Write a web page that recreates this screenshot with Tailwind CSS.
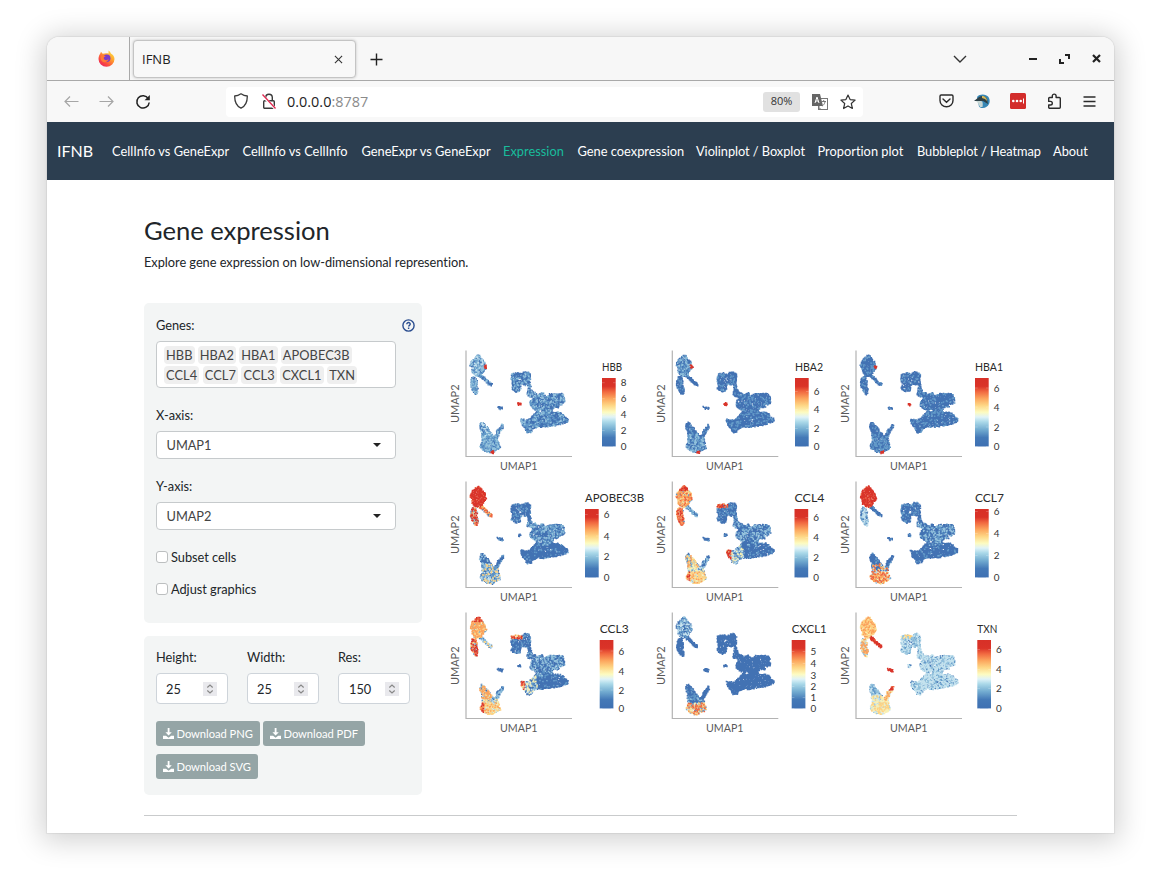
<!DOCTYPE html>
<html lang="en">
<head>
<meta charset="utf-8">
<title>IFNB</title>
<script src="https://cdn.jsdelivr.net/npm/@tailwindcss/browser@4"></script>
</head>
<body class="bg-white w-[1161px] h-[890px] overflow-hidden pt-[37px] pl-[47px] font-['Lato',sans-serif] text-[12.8px] tracking-[-0.035px] text-[#212529]">
<div class="w-[1067px] h-[796px] bg-white rounded-t-xl overflow-clip shadow-[0_3px_28px_5px_rgba(0,0,0,0.18),0_0_1px_1px_rgba(0,0,0,0.06)] flex flex-col">
  <!-- tab strip -->
  <div class="h-11 shrink-0 bg-[#f7f7f7] border-b border-[#a9a9a9] flex items-center font-['Open_Sans',sans-serif]">
    <div class="w-[83px] h-full border-r border-[#a9a9a9] flex items-center justify-end pr-[14px]">
      <svg width="17" height="17" viewBox="0 0 17 17">
        <defs><linearGradient id="fx" x1="1" y1="0" x2="0.2" y2="1"><stop offset="0" stop-color="#fff04d"/><stop offset=".4" stop-color="#ffa52e"/><stop offset=".75" stop-color="#fb4b40"/><stop offset="1" stop-color="#e8215e"/></linearGradient></defs>
        <path d="M10.5.5c1.5 1 2 2 2.400 2.900C15 4.300 16.500 6.500 16.500 9A8 7.800 0 0 1 .5 9C.5 6.300 1.500 4.500 2.600 3L2.900 1.800 4.700 3.700C7 3 9 3 10.600 3.500Z" fill="url(#fx)"/>
        <circle cx="8.800" cy="8.300" r="3.700" fill="#7a3bc9"/>
        <path d="M3 6c1.500-1 3.500-.5 4.800.8-1.300 0-2 .5-2.100 1.400.5 2.200 3.600 2.800 5 .4-.5 3.400-3.500 4.400-5.600 3.400S2 8.500 3 6Z" fill="#ff7a35"/>
      </svg>
    </div>
    <div class="ml-[3px] w-[223px] h-[38px] rounded bg-[#f8f8f8] border border-[#c4c4c4] shadow-[0_0_3px_rgba(0,0,0,0.22)] flex items-center justify-between pl-2 pr-[12px] text-[13px] tracking-normal text-[#222]">
      <span class="pt-[2px]">IFNB</span>
      <svg class="mt-px" width="9" height="9" viewBox="0 0 10 10" stroke="#333" stroke-width="1.200"><path d="M1 1l8 8M9 1l-8 8"/></svg>
    </div>
    <svg class="ml-[14px] mt-px" width="13" height="13" viewBox="0 0 13 13" stroke="#222" stroke-width="1.400"><path d="M6.500.5v12M.5 6.500h12"/></svg>
    <div class="ml-auto flex items-center pr-[12px]">
      <svg width="14" height="8" viewBox="0 0 14 8" fill="none" stroke="#333" stroke-width="1.400"><path d="M1 1l6 6 6-6"/></svg>
      <svg class="ml-[62px]" width="8" height="10" viewBox="0 0 8 10"><path d="M0 4h8v2H0z" fill="#222"/></svg>
      <svg class="ml-[22px]" width="11" height="10" viewBox="0 0 11 10" fill="none" stroke="#222" stroke-width="2"><path d="M6 1h4v4M1 5v4h4"/></svg>
      <svg class="ml-[22px] mr-px" width="9" height="9" viewBox="0 0 9 9" stroke="#222" stroke-width="2.200"><path d="M1 1l7 7M8 1L1 8"/></svg>
    </div>
  </div>
  <!-- address bar -->
  <div class="h-[41px] shrink-0 bg-[#f8f8f8] flex items-center font-['Open_Sans',sans-serif]">
    <div class="flex items-center w-[179px] pl-[17px]">
      <svg width="15" height="12" viewBox="0 0 15 12" fill="none" stroke="#a6a6a6" stroke-width="1.200"><path d="M14.500 5.500H1M6 .5L1 5.500l5 5"/></svg>
      <svg class="ml-[20px]" width="15" height="12" viewBox="0 0 15 12" fill="none" stroke="#a6a6a6" stroke-width="1.200"><path d="M.5 5.500H14M9 .5l5 5-5 5"/></svg>
      <svg class="ml-[21px]" width="16" height="16" viewBox="0 0 16 16" fill="none" stroke="#222" stroke-width="1.500"><path d="M13.300 4.600A6.200 6.200 0 1 0 14.200 8.500"/><path d="M14.800 1v5.200H9.600z" fill="#222" stroke="none"/></svg>
    </div>
    <div class="w-[637px] h-[30px] bg-white rounded-sm flex items-center">
      <svg class="ml-[8px] mb-px" width="14" height="16" viewBox="0 0 14 16" fill="none" stroke="#3a3a3a" stroke-width="1.300"><path d="M7 .8C9 2.200 11 2.900 13.300 3 13.400 9 11.500 13 7 15.200 2.500 13 .6 9 .7 3 3 2.900 5 2.200 7 .8Z" stroke-linejoin="round"/></svg>
      <svg class="ml-[13px]" width="16" height="17" viewBox="0 0 16 17" fill="none" stroke="#3a3a3a" stroke-width="1.400"><rect x="2.700" y="7.700" width="10.600" height="7.600" rx="1"/><path d="M4.700 7.500V4.500a3.300 3.300 0 0 1 6.600 0v3"/><path d="M1.500 2.500l13.500 14" stroke="#fff" stroke-width="2.600"/><path d="M1.500 1.500l13 14" stroke="#e22850" stroke-width="1.300"/></svg>
      <div class="ml-[10px] text-[14.400px] tracking-[0.02px] text-[#222]">0.0.0.0<span class="text-[#8b8b8b]">:8787</span></div>
      <div class="ml-auto w-[37px] h-5 rounded-[3px] bg-[#e1e1e1] flex items-center justify-center text-[11px] tracking-normal text-[#333]">80%</div>
      <svg class="ml-[12px]" width="16" height="16" viewBox="0 0 16 16"><rect x="6.500" y="4.500" width="9" height="11" fill="#fff" stroke="#777"/><path d="M0 0h8l3 12H0z" fill="#666"/><path d="M3 9l2-6 2 6M3.700 7h2.600" stroke="#fff" fill="none"/><path d="M9.500 7.500h4.500M11.700 6v1.500M13 8c-.5 2-1.500 3-2.700 4M7 12v3h2" stroke="#777" fill="none"/></svg>
      <svg class="ml-[12px] mr-[7px]" width="16" height="16" viewBox="0 0 16 16" fill="none" stroke="#333" stroke-width="1.200" stroke-linejoin="round"><path d="M8 1l2.100 4.600 5 .5-3.800 3.400 1.100 5L8 11.900l-4.400 2.600 1.100-5L.9 6.100l5-.5Z"/></svg>
    </div>
    <div class="ml-auto flex items-center pr-[18px] pb-px">
      <svg width="15" height="14" viewBox="0 0 15 14" fill="none" stroke="#2b2b2b" stroke-width="1.400"><path d="M2.200 1h10.600a1.200 1.200 0 0 1 1.200 1.200V6.500a6.500 6.300 0 0 1-13 0V2.200A1.200 1.200 0 0 1 2.200 1Z"/><path d="M4 5l3.500 3.300L11 5" stroke-linecap="round"/></svg>
      <svg class="ml-[20px]" width="17" height="15" viewBox="0 0 17 15"><path d="M3 3C6-.5 12 0 14.500 3c2 3 1.500 7-1.500 9.500-3 2-6 2-8 0z" fill="#3787b5"/><path d="M0 7l5-4c3-2 7-1 8 2l1 5-5-3z" fill="#2d4148"/><path d="M2 7h5c2 0 2 3 1.500 6L6 13 4 9z" fill="#c7d7d5"/><path d="M8 2c3 0 5 2 5 5l-2-2-3-1z" fill="#d5b85b"/></svg>
      <svg class="ml-[19px]" width="16" height="16" viewBox="0 0 16 16"><rect width="16" height="16" rx="1.500" fill="#d32d2b"/><g fill="#fff"><circle cx="3.300" cy="8" r="1.300"/><circle cx="7" cy="8" r="1.300"/><circle cx="10.700" cy="8" r="1.300"/><path d="M13 5.500h1v5h-1z"/></g></svg>
      <svg class="ml-[21px]" width="15" height="16" viewBox="0 0 15 16" fill="none" stroke="#2b2b2b" stroke-width="1.400" stroke-linejoin="round"><path d="M1.700 5.500A1 1 0 0 1 2.700 4.500H5.300V3a1.900 1.900 0 0 1 3.800 0v1.500h3.200a1 1 0 0 1 1 1v8.800a1 1 0 0 1-1 1H2.700a1 1 0 0 1-1-1V12H3.500a1.800 1.800 0 0 0 0-3.600H1.700Z"/></svg>
      <svg class="ml-[21px]" width="13" height="11" viewBox="0 0 13 11" stroke="#2b2b2b" stroke-width="1.300"><path d="M.5 1h12M.5 5.500h12M.5 10h12"/></svg>
    </div>
  </div>
  <!-- application navigation -->
  <nav class="h-[58px] shrink-0 bg-[#2c3e50] flex items-center pl-[10px] pt-px text-white tracking-[0.02px] whitespace-nowrap">
    <span class="text-[16px] w-[55px] pb-[2px]">IFNB</span>
    <span class="w-[130.500px]">CellInfo vs GeneExpr</span><span class="w-[119px]">CellInfo vs CellInfo</span><span class="w-[141.500px]">GeneExpr vs GeneExpr</span><span class="w-[74.500px] text-[#18bc9c]">Expression</span><span class="w-[118.500px]">Gene coexpression</span><span class="w-[121.500px] tracking-[-0.05px]">Violinplot / Boxplot</span><span class="w-[99.500px]">Proportion plot</span><span class="w-[136px] tracking-[-0.05px]">Bubbleplot / Heatmap</span><span>About</span>
  </nav>
  <main class="pl-[97px] w-[970px]">
    <h1 class="pt-[34px] text-[25.600px] leading-8">Gene expression</h1>
    <p class="mt-[7px] leading-[18px]">Explore gene expression on low-dimensional represention.</p>
    <div class="mt-8 flex">
      <div class="w-[278px]">
        <section class="h-[320px] rounded-[5px] bg-[#f3f5f5] px-3 pt-[13px]">
          <div class="flex justify-between items-center h-[18px]">
            <span class="pt-px">Genes:</span>
            <svg class="-mr-[5px]" width="13" height="13" viewBox="0 0 13 13" fill="none" stroke="#2a4d8f" stroke-width="1.400"><circle cx="6.500" cy="6.500" r="5.600"/><path d="M4.800 5.300c0-2.400 3.500-2.200 3.400-.1 0 1.100-1.600 1.200-1.600 2.400M6.600 8.600v1.300"/></svg>
          </div>
          <div class="mt-[7px] w-60 h-[47px] rounded border border-[#c6cacc] bg-white pl-[7px] pt-1 flex flex-col gap-[2px] leading-[18px] tracking-[0.08px] text-[#444]">
            <div class="flex gap-[3.200px]"><span class="bg-[#efefef] rounded-sm px-[2px]">HBB</span><span class="bg-[#efefef] rounded-sm px-[2px]">HBA2</span><span class="bg-[#efefef] rounded-sm px-[2px]">HBA1</span><span class="bg-[#efefef] rounded-sm px-[2px]">APOBEC3B</span></div>
            <div class="flex gap-[3.500px]"><span class="bg-[#efefef] rounded-sm px-[2px]">CCL4</span><span class="bg-[#efefef] rounded-sm px-[2px]">CCL7</span><span class="bg-[#efefef] rounded-sm px-[2px]">CCL3</span><span class="bg-[#efefef] rounded-sm px-[2px]">CXCL1</span><span class="bg-[#efefef] rounded-sm px-[2px]">TXN</span></div>
          </div>
          <div class="mt-[18px] leading-[18px]">X-axis:</div>
          <div class="mt-[7px] w-60 h-7 rounded border border-[#c6cacc] bg-white pl-[9.500px] pr-[14px] flex items-center justify-between text-[#444]"><span class="pt-px">UMAP1</span><svg width="8" height="4" viewBox="0 0 8 4"><path d="M0 0h8L4 4z" fill="#222"/></svg></div>
          <div class="mt-[18px] leading-[18px]">Y-axis:</div>
          <div class="mt-[7px] w-60 h-7 rounded border border-[#c6cacc] bg-white pl-[9.500px] pr-[14px] flex items-center justify-between text-[#444]"><span class="pt-px">UMAP2</span><svg width="8" height="4" viewBox="0 0 8 4"><path d="M0 0h8L4 4z" fill="#222"/></svg></div>
          <div class="mt-[18px] h-[18px] flex items-center gap-[3px]"><span class="size-3 rounded-[3px] border border-[#bcbfc0] bg-white"></span><span class="pt-px">Subset cells</span></div>
          <div class="mt-[14px] h-[18px] flex items-center gap-[3px]"><span class="size-3 rounded-[3px] border border-[#bcbfc0] bg-white"></span><span class="pt-px">Adjust graphics</span></div>
        </section>
        <section class="mt-[13px] h-[159px] rounded-[5px] bg-[#f3f5f5] px-3 pt-3">
          <div class="flex gap-[19px]">
            <div class="w-[72px]"><div class="leading-[18px]">Height:</div><div class="mt-[7px] h-[31px] rounded border border-[#ced4da] bg-white pl-[9px] pr-[10px] flex items-center justify-between"><span class="pt-[2px]">25</span><span class="w-[14px] h-[14px] bg-[#e9e9ed] flex items-center justify-center"><svg width="8" height="10" viewBox="0 0 8 10" fill="none" stroke="#888" stroke-width="1.200"><path d="M1.300 3.500L4 1l2.700 2.500M1.300 6.500L4 9l2.700-2.500"/></svg></span></div></div>
            <div class="w-[72px]"><div class="leading-[18px]">Width:</div><div class="mt-[7px] h-[31px] rounded border border-[#ced4da] bg-white pl-[9px] pr-[10px] flex items-center justify-between"><span class="pt-[2px]">25</span><span class="w-[14px] h-[14px] bg-[#e9e9ed] flex items-center justify-center"><svg width="8" height="10" viewBox="0 0 8 10" fill="none" stroke="#888" stroke-width="1.200"><path d="M1.300 3.500L4 1l2.700 2.500M1.300 6.500L4 9l2.700-2.500"/></svg></span></div></div>
            <div class="w-[72px]"><div class="leading-[18px]">Res:</div><div class="mt-[7px] h-[31px] rounded border border-[#ced4da] bg-white pl-[9px] pr-[10px] flex items-center justify-between"><span class="pt-[2px] pl-px">150</span><span class="w-[14px] h-[14px] bg-[#e9e9ed] flex items-center justify-center"><svg width="8" height="10" viewBox="0 0 8 10" fill="none" stroke="#888" stroke-width="1.200"><path d="M1.300 3.500L4 1l2.700 2.500M1.300 6.500L4 9l2.700-2.500"/></svg></span></div></div>
          </div>
          <div class="mt-[17px] flex flex-wrap gap-x-[3px] gap-y-2 text-[11.200px] text-white whitespace-nowrap">
            <div class="w-[104px] h-[25px] rounded-[3px] bg-[#95a5a6] flex items-center pl-[7px] gap-[2.500px]"><svg width="11" height="11" viewBox="0 0 11 11"><path d="M4.700 0h1.800v4.200h2.300L5.600 7.500 2.400 4.200h2.300zM0 7.700h3l2.600 2 2.600-2H11V11H0z" fill="#fff"/></svg><span class="pt-px">Download PNG</span></div>
            <div class="w-[102px] h-[25px] rounded-[3px] bg-[#95a5a6] flex items-center pl-[7px] gap-[2.500px]"><svg width="11" height="11" viewBox="0 0 11 11"><path d="M4.700 0h1.800v4.200h2.300L5.600 7.500 2.400 4.200h2.300zM0 7.700h3l2.600 2 2.600-2H11V11H0z" fill="#fff"/></svg><span class="pt-px">Download PDF</span></div>
            <div class="w-[102px] h-[25px] rounded-[3px] bg-[#95a5a6] flex items-center pl-[7px] gap-[2.500px]"><svg width="11" height="11" viewBox="0 0 11 11"><path d="M4.700 0h1.800v4.200h2.300L5.600 7.500 2.400 4.200h2.300zM0 7.700h3l2.600 2 2.600-2H11V11H0z" fill="#fff"/></svg><span class="pt-px">Download SVG</span></div>
          </div>
        </section>
      </div>
      <div id="plots" class="ml-6 mt-[43px] grid grid-cols-[206px_184px_184px] auto-rows-[131px] content-start h-[400px] tracking-normal"></div>
    </div>
    <hr class="mt-5 w-[873px] border-[#c9cbcc]">
  </main>
</div>
<svg width="0" height="0" class="absolute"><defs><linearGradient id="scale" x1="0" y1="1" x2="0" y2="0">
<stop offset="0" stop-color="#3e70b2"/><stop offset=".13" stop-color="#4479b7"/><stop offset=".25" stop-color="#74add1"/><stop offset=".36" stop-color="#abd9e9"/><stop offset=".43" stop-color="#e0f3f8"/><stop offset=".5" stop-color="#fdfbc0"/><stop offset=".6" stop-color="#fed685"/><stop offset=".7" stop-color="#fca55d"/><stop offset=".8" stop-color="#f16840"/><stop offset=".88" stop-color="#da3328"/><stop offset="1" stop-color="#d73027"/></linearGradient></defs></svg>
<script>
// Seeded generator keeps the scatter stable between loads
let seed = 7;
const rnd = () => { seed = (seed * 1664525 + 1013904223) % 4294967296; return seed / 4294967296; };
const palette = ['#4272b3','#6199c8','#91c1dc','#c4e2ee','#f8f0b4','#fdd283','#fba25b','#ee6741','#d9342a'];
// Cluster outlines, in thirds of a pixel relative to the panel corner (78,30)
const shapes = {
  top: [[114,43],[120,46],[126,57],[134,64],[134,72],[138,80],[130,92],[122,103],[108,106],[98,96],[97,82],[91,74],[97,58],[106,50]],
  stalk: [[119,101],[127,101],[141,116],[157,129],[155,136],[146,133],[131,118],[118,108]],
  low: [[98,108],[106,110],[111,122],[109,132],[113,145],[111,160],[106,159],[100,150],[94,138],[93,120]],
  block: [[216,100],[233,97],[244,101],[252,94],[264,94],[270,101],[269,128],[273,146],[278,154],[272,154],[265,145],[264,129],[256,132],[247,128],[241,134],[239,150],[229,153],[214,144],[218,130],[214,116]],
  upper: [[264,150],[271,150],[277,158],[286,155],[290,163],[303,160],[308,163],[316,166],[328,160],[364,159],[370,163],[373,187],[363,184],[367,190],[352,190],[357,199],[342,198],[336,208],[334,216],[290,220],[294,208],[284,205],[272,196],[271,186],[276,176],[286,172],[262,163]],
  lower: [[284,220],[296,206],[327,207],[341,216],[358,215],[370,221],[373,229],[383,233],[382,242],[366,248],[350,252],[311,258],[284,257]],
  tip: [[242,236],[263,239],[273,231],[288,217],[290,258],[278,263],[272,275],[261,274],[256,262],[248,256]],
  dot: [[233,186],[240,185],[245,190],[240,195],[234,193]],
  pair: [[171,197],[180,197],[189,199],[189,207],[179,206],[173,202]],
  ear: [[123,246],[129,246],[136,256],[142,260],[147,270],[157,280],[150,290],[126,287],[126,274],[120,260]],
  foot: [[127,282],[150,277],[162,288],[172,290],[175,304],[180,322],[168,327],[157,335],[140,332],[124,323],[121,315],[128,304]],
  arm: [[186,249],[191,251],[190,261],[183,270],[176,286],[168,293],[161,288],[168,278],[171,267],[180,259]],
  sat: [[304,157],[309,157],[309,162],[304,162]],
  red1: [[133,73],[138,73],[142,79],[137,84],[133,81]],
  red2: [[151,331],[161,330],[162,338],[153,339]]
};
const b = '00000001', B = '0000000000000001', hot = '888878887';
const base = (d, o) => Object.assign(Object.fromEntries(Object.keys(shapes).map(k => [k, d])), {red1: '', red2: ''}, o);
const plots = [
 {g:'HBB', x:156, w:20, a:0, t:[[8,36.7],[6,52.7],[4,68.5],[2,84.5],[0,100.5]], c:base('0000000112', {top:'000111223', foot:'000111122', low:'00112', ear:'0001113', dot:'8', red1:'8', red2:'8'})},
 {g:'HBA2', x:143, w:28, a:.3, t:[[6,45.5],[4,63.7],[2,82.5],[0,100.5]], c:base('00000001', {top:'00000112', foot:'0000112', dot:'8', red1:'8', red2:'8'})},
 {g:'HBA1', x:139, w:28, a:0, t:[[6,42],[4,61],[2,81],[0,100.5]], c:base('00000001', {foot:'0000011', dot:'8', red1:'8', red2:'8'})},
 {g:'APOBEC3B', x:139, w:59, a:0, t:[[6,37.5],[4,59],[2,79.500],[0,100.5]], c:base(b, {top:hot, stalk:'0567', low:'0125678', upper:'00001012', lower:B, tip:B, foot:'00011235', ear:'000002'})},
 {g:'CCL4', x:142.5, w:30, a:.3, t:[[6,40.5],[4,60.500],[2,80.500],[0,100.5]], c:base('0000001', {top:'1455667', topHead:'7788', stalk:'0012', low:'0567877', blockTop:'678078', upper:'00000012', lower:B, tip:'0012340', tipLeft:'78580', ear:'0124560', foot:'13445556', footTop:'0012344', footLeft:'55678', arm:'00002'})},
 {g:'CCL7', x:139, w:29, a:0, t:[[6,34.5],[4,56.5],[2,78.500],[0,100.5]], c:base(b, {top:hot, low:'000123', upper:'0000012', lower:B, tip:B, foot:'13455667', footTop:'00003567', ear:'000000001'})},
 {g:'CCL3', x:153.700, w:29, a:0, t:[[6,43],[4,63],[2,82],[0,100.5]], c:base(b, {top:'1455666', topHead:'67788', stalk:'01235', low:'1256788', blockTop:'4678', upper:'0000012', lower:B, tip:'00123040', tipLeft:'57824', ear:'0235660', foot:'23445556', footTop:'0012345', footLeft:'56678', arm:'0012'})},
 {g:'CXCL1', x:139.7, w:35, a:.3, t:[[5,43.5],[4,55.5],[3,67],[2,78.5],[1,89.5],[0,100.5]], c:base('0', {top:'00000123', ear:'0000001', foot:'0134567', footTop:'0000002'})},
 {g:'TXN', x:141.3, w:20, a:0, t:[[6,41.5],[4,61.5],[2,80.5],[0,100.5]], c:base('00112223333', {top:'45555664', stalk:'78878', low:'1234566', block:'0122233', blockTop:'2245', dot:'013', pair:'8', arm:'3456', armTip:'788', foot:'23344455', footTop:'2334445', ear:'011223'})}
];
function inside(p, x, y) {
  let r = false;
  for (let i = 0, j = p.length - 1; i < p.length; j = i++)
    if ((p[i][1] > y) !== (p[j][1] > y) && x < (p[j][0] - p[i][0]) * (y - p[i][1]) / (p[j][1] - p[i][1]) + p[i][0]) r = !r;
  return r;
}
const small = ['dot', 'pair', 'red1', 'red2', 'arm', 'stalk'];
const near = (p, x, y) => inside(p, x, y) || inside(p, x - 2, y) || inside(p, x + 2, y) || inside(p, x, y - 2) || inside(p, x, y + 2);
function zone(c, k, u, v) {
  if (k === 'block' && c.blockTop && v < 108 && u < 246) return c.blockTop;
  if (k === 'top' && c.topHead && v < 56) return c.topHead;
  if (k === 'foot' && c.footTop && v < 300) return c.footTop;
  if (k === 'foot' && c.footLeft && u < 132) return c.footLeft;
  if (k === 'tip' && c.tipLeft && u < 254) return c.tipLeft;
  if (k === 'arm' && c.armTip && v < 263) return c.armTip;
  return c[k];
}
function cells(c) {
  const layers = palette.map(() => '');
  for (const k in shapes) {
    if (!c[k]) continue;
    const p = shapes[k], xs = p.map(q => q[0]), ys = p.map(q => q[1]);
    const hit = small.includes(k) ? inside : near;
    const sparse = k === 'upper' || k === 'lower' || k === 'block' ? .08 : small.includes(k) ? 0 : .03;
    for (let y = Math.min(...ys) - 3; y < Math.max(...ys) + 4; y += 3)
      for (let x = Math.min(...xs) - 3; x < Math.max(...xs) + 4; x += 3) {
        const u = x + (rnd() - .5) * 2.5, v = y + (rnd() - .5) * 2.5;
        if (!hit(p, u, v) || rnd() < sparse) continue;
        // gap between the two lobes of the large cluster
        if (Math.hypot(u - 303, (v - 211) * 1.3) < 7 && rnd() < .7) continue;
        if (Math.hypot(u - 240, v - 118) < 7 && rnd() < .5) continue;
        const s = zone(c, k, u, v);
        const i = +s[Math.floor(rnd() * s.length)];
        layers[i] += `M${((u - 78) / 3 + 19.3).toFixed(1)} ${((v - 30) / 3 + 4.1).toFixed(1)}h1.5v1.5h-1.5z`;
      }
  }
  return layers.map((d, i) => d ? `<path d="${d}" fill="${palette[i]}"/>` : '').join('');
}
document.getElementById('plots').innerHTML = plots.map(p => `
<svg width="206" height="131" overflow="visible" font-family="Lato, sans-serif">
  ${cells(p.c)}
  <path d="M${20 + p.a} 4.500V110.500H${126 + p.a}" fill="none" stroke="#b3b3b3" stroke-width="1.200"/>
  <g font-size="12" fill="#5a5a5a"><text x="54" y="123.700" textLength="37.500" lengthAdjust="spacingAndGlyphs">UMAP1</text>
  <text transform="translate(13.200 77) rotate(-90)" textLength="38.500" lengthAdjust="spacingAndGlyphs">UMAP2</text></g>
  <text x="${p.x}" y="24.800" font-size="11.900" fill="#2a2a2a" textLength="${p.w}" lengthAdjust="spacingAndGlyphs">${p.g}</text>
  <rect x="${p.x}" y="32" width="13.700" height="68.500" fill="url(#scale)"/>
  ${p.t.map(([n, y]) => `<path d="M${p.x} ${y}h2.700M${p.x + 11} ${y}h2.700" stroke="#fff" stroke-opacity=".35" stroke-width=".6"/><text x="${p.x + 18.700}" y="${y + 3.700}" font-size="9.900" fill="#333">${n}</text>`).join('')}
</svg>`).join('');
</script>
</body>
</html>
